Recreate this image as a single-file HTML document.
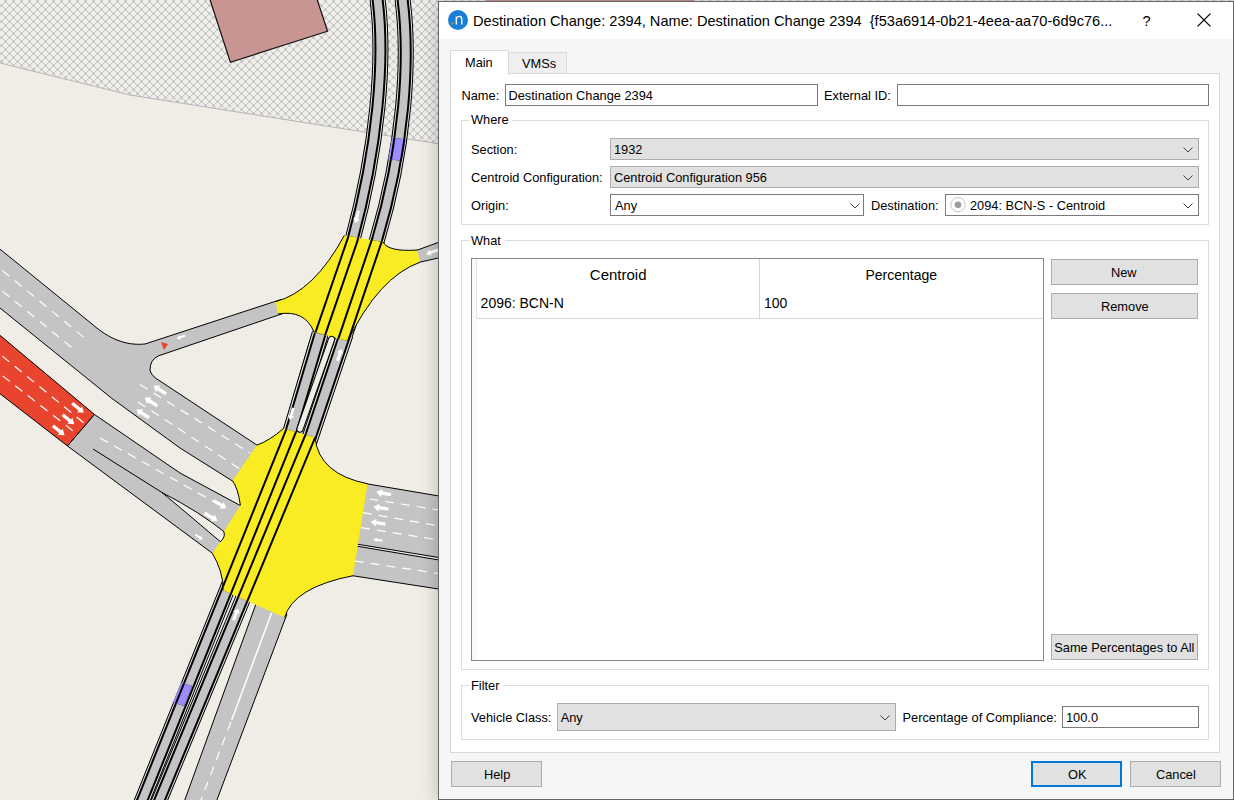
<!DOCTYPE html><html><head><meta charset="utf-8"><style>
html,body{margin:0;padding:0;}
body{width:1234px;height:800px;overflow:hidden;position:relative;background:#f0ede7;font-family:"Liberation Sans",sans-serif;}
.t{position:absolute;line-height:1;white-space:pre;}
.b{position:absolute;}
.s{position:absolute;overflow:visible;}
#map{position:absolute;left:0;top:0;}
</style></head><body>
<svg id="map" width="1234" height="800" viewBox="0 0 1234 800">
<defs>
<pattern id="hatch" width="8" height="8" patternUnits="userSpaceOnUse" shape-rendering="crispEdges"><rect x="0" y="4" width="1" height="1" fill="#c6c7c9"/><rect x="0" y="5" width="1" height="1" fill="#d8d8d8"/><rect x="0" y="6" width="1" height="1" fill="#c6c7c9"/><rect x="1" y="4" width="1" height="1" fill="#d8d8d8"/><rect x="1" y="5" width="1" height="1" fill="#a9abae"/><rect x="1" y="6" width="1" height="1" fill="#d8d8d8"/><rect x="2" y="4" width="1" height="1" fill="#c6c7c9"/><rect x="2" y="5" width="1" height="1" fill="#d8d8d8"/><rect x="2" y="6" width="1" height="1" fill="#c6c7c9"/><rect x="3" y="3" width="1" height="1" fill="#c6c7c9"/><rect x="3" y="7" width="1" height="1" fill="#c6c7c9"/><rect x="4" y="0" width="1" height="1" fill="#c6c7c9"/><rect x="4" y="1" width="1" height="1" fill="#d8d8d8"/><rect x="4" y="2" width="1" height="1" fill="#c6c7c9"/><rect x="5" y="0" width="1" height="1" fill="#d8d8d8"/><rect x="5" y="1" width="1" height="1" fill="#a9abae"/><rect x="5" y="2" width="1" height="1" fill="#d8d8d8"/><rect x="6" y="0" width="1" height="1" fill="#c6c7c9"/><rect x="6" y="1" width="1" height="1" fill="#d8d8d8"/><rect x="6" y="2" width="1" height="1" fill="#c6c7c9"/><rect x="7" y="3" width="1" height="1" fill="#c6c7c9"/><rect x="7" y="7" width="1" height="1" fill="#c6c7c9"/></pattern>
<path id="r1" d="M377,-5 C386,60 377,150 352.5,240 L315.4,348 L291.4,430 L140.4,805"/>
<path id="r2" d="M402,-5 C411,60 404,150 377,240 L340.5,348 L312.8,430 L157.5,805"/>
<path id="nA" d="M344.4,235.3 L383,242 Q388,252 417.5,250 L419.8,262.3 Q379,277 347.8,341 L314,332 Q305,309.5 278,314 L275.8,301.6 Q314,291.5 344.4,235.3 Z"/>
<path id="nB" d="M283.5,428.5 L315,437.5 Q318.8,474 367.6,483.8 L353,575.7 Q293,587.5 284.6,617.6 L223.5,590.5 Q222.75,570.25 212.4,553.5 L220,542 Q226,537 223.8,531.6 L240.4,505.3 Q238,488 232.5,480.8 L257,445 Q269,441 283.5,428.5 Z"/>
<clipPath id="nodes"><use href="#nA"/><use href="#nB"/></clipPath>
<path id="arw" d="M-7.5,-1.7 L2,-1.7 L2,-4 L7.5,0 L2,4 L2,1.7 L-7.5,1.7 Z"/>
</defs>
<rect x="0" y="0" width="1234" height="800" fill="#f0ede7"/>
<!-- hatched area -->
<path d="M-5,-5 L1240,-5 L1240,160 L440,144 L130,95 L0,63 L-5,63 Z" fill="url(#hatch)" stroke="none"/>
<path d="M0,63 L130,95 L440,144" fill="none" stroke="#b5b5b5" stroke-width="1"/>
<!-- building -->
<path d="M200,-31 L307,-31 L327.6,31.2 L230.4,62.2 Z" fill="#c99593" stroke="#111" stroke-width="1.2"/>
<path d="M486,-5 L694,-5 L694,1 L486,1 Z" fill="#c99593"/>

<!-- rails -->
<g fill="none" stroke-linejoin="round">
<use href="#r1" stroke="#000" stroke-width="16"/>
<use href="#r1" stroke="#e4e2de" stroke-width="14"/>
<use href="#r1" stroke="#000" stroke-width="12"/>
<use href="#r1" stroke="#c4c4c4" stroke-width="8"/>
<use href="#r2" stroke="#000" stroke-width="16"/>
<use href="#r2" stroke="#e4e2de" stroke-width="14"/>
<use href="#r2" stroke="#000" stroke-width="12"/>
<use href="#r2" stroke="#c4c4c4" stroke-width="8"/>
</g>
<g fill="none" stroke-linecap="butt">
<path id="m1" d="M320.1,334 L287.9,442"/>
<path id="m2" d="M345.1,334 L308.7,442"/>
<use href="#m1" stroke="#000" stroke-width="17"/>
<use href="#m1" stroke="#e4e2de" stroke-width="15"/>
<use href="#m1" stroke="#000" stroke-width="12.7"/>
<use href="#m1" stroke="#c4c4c4" stroke-width="8.7"/>
<use href="#m2" stroke="#000" stroke-width="17"/>
<use href="#m2" stroke="#e4e2de" stroke-width="15"/>
<use href="#m2" stroke="#000" stroke-width="12.7"/>
<use href="#m2" stroke="#c4c4c4" stroke-width="8.7"/>
</g>

<!-- main road B + branch C -->
<path d="M-10,241 L92,324 C108,338 125,346 145,344 L281,299.5 L283,313.5 L158,356 Q150,360 150,370 Q151,376 160,381 L260.3,447.3 L235.8,483.1 L180,448 L112,398.5 L0,308 L-10,300 Z" fill="#c4c4c4" stroke="#000" stroke-width="1"/>
<!-- red -->
<path d="M-10,327 L94.5,414.5 L67.5,446 L-10,386 Z" fill="#e8442e" stroke="#000" stroke-width="1"/>
<!-- road D -->
<path d="M94.5,414.5 L180,473 L243.8,507.4 L227.2,533.7 L223.3,544.2 L215.7,555.7 L67.5,446 Z" fill="#c4c4c4" stroke="#000" stroke-width="1"/>
<path d="M93,449 L162,492.5 Q200,512 227,534 L223,544 Q195,520 162,492.5" fill="#f0ede7" stroke="#000" stroke-width="1"/>
<!-- road E right -->
<path d="M362,483 L445,497 L445,590 L348,575 Z" fill="#c4c4c4" stroke="#000" stroke-width="1"/>
<path d="M350,543 L445,558.5 L445,561 L350,545 Z" fill="#f0ede7" stroke="#000" stroke-width="1"/>
<!-- road G right of node A -->
<path d="M412,252 L445,240 L445,256.5 L414,263.5 Z" fill="#c4c4c4" stroke="#000" stroke-width="1"/>
<!-- road F bottom -->
<path d="M256.5,602.5 L287,614 L215,805 L183,805 Z" fill="#c4c4c4" stroke="#000" stroke-width="1"/>

<!-- nodes -->
<g fill="#f9ec22" stroke="none">
<use href="#nA"/>
<use href="#nB"/>
</g>
<g fill="none" stroke="#000" stroke-width="1">
<path d="M383,242 Q388,252 417.5,250 M419.8,262.3 Q379,277 347.8,341 M314,332 Q305,309.5 278,314 M275.8,301.6 Q314,291.5 344.4,235.3"/>
<path d="M315,437.5 Q318.8,474 367.6,483.8 M353,575.7 Q293,587.5 284.6,617.6 M223.5,590.5 Q222.75,570.25 212.4,553.5 M220,542 Q226,537 223.8,531.6 M240.4,505.3 Q238,488 232.5,480.8 M257,445 Q269,441 283.5,428.5"/>
</g>
<g fill="none" clip-path="url(#nodes)">
<use href="#r1" stroke="#000" stroke-width="12"/>
<use href="#r1" stroke="#f9ec22" stroke-width="8"/>
<use href="#r2" stroke="#000" stroke-width="12"/>
<use href="#r2" stroke="#f9ec22" stroke-width="8"/>
</g>

<path d="M331.5,339.5 L300,429" fill="none" stroke="#000" stroke-width="7.2" stroke-linecap="round"/>
<path d="M331.5,339.5 L300,429" fill="none" stroke="#f0ede7" stroke-width="5.2" stroke-linecap="round"/>
<!-- lane markings -->
<g fill="none" stroke="#fff" stroke-width="1.2" stroke-dasharray="9 7">
<path d="M-10,260.5 L86,339"/>
<path d="M-10,281 L76,351"/>
<path d="M140,384.5 L250,453"/>
<path d="M138,402 L240,469"/>
<path d="M-10,346 L84,423"/>
<path d="M-10,366 L77,434"/>
<path d="M100,438 L225,508"/>
<path d="M369.3,499 L445,511"/>
<path d="M362.8,512.6 L445,527"/>
<path d="M361,527.7 L445,541"/>
<path d="M354.6,561 L445,574.5"/>
<path d="M199,805 L231.7,720"/>
</g>
<path d="M271.6,612.7 L231.7,720" stroke="#fff" stroke-width="1.5"/>
<!-- arrows -->
<g fill="#fff">
<use href="#arw" transform="translate(159.7,389.8) rotate(213)"/>
<use href="#arw" transform="translate(151,401.8) rotate(213)"/>
<use href="#arw" transform="translate(142.7,413.7) rotate(213)"/>
<use href="#arw" transform="translate(78,408) rotate(39)"/>
<use href="#arw" transform="translate(68.4,419.5) rotate(39)"/>
<use href="#arw" transform="translate(58.7,430.5) rotate(39)"/>
<use href="#arw" transform="translate(220,504.4) rotate(30)"/>
<use href="#arw" transform="translate(211,517) rotate(30)"/>
<use href="#arw" transform="translate(383.6,493.3) rotate(190)"/>
<use href="#arw" transform="translate(381,508) rotate(189)"/>
<use href="#arw" transform="translate(378,522.9) rotate(189)"/>
<use href="#arw" transform="translate(378,540) rotate(189) scale(0.6)"/>
<use href="#arw" transform="translate(199,537) rotate(32) scale(0.6)"/>
<use href="#arw" transform="translate(181,337) rotate(160) scale(0.6)"/>
<use href="#arw" transform="translate(357,217) rotate(104) scale(0.85)"/>
<use href="#arw" transform="translate(432,252) rotate(160) scale(0.85)"/>
<use href="#arw" transform="translate(291.5,414) rotate(107) scale(0.85)"/>
<use href="#arw" transform="translate(339.5,355) rotate(-71) scale(0.85)"/>
<use href="#arw" transform="translate(235.8,614.4) rotate(-68) scale(0.85)"/>
</g>
<path d="M161,342 L168,344 L164,350 Z" fill="#e8442e"/>
<!-- blue markers -->
<clipPath id="bl1"><path d="M392,137.5 L406,139.5 L402,161 L388,159 Z"/></clipPath>
<clipPath id="bl2"><path d="M176,681 L192,686 L184,706 L169,701 Z"/></clipPath>
<g fill="none">
<g clip-path="url(#bl1)"><use href="#r2" stroke="#9c8cff" stroke-width="16"/><use href="#r2" stroke="#000" stroke-width="12"/><use href="#r2" stroke="#9c8cff" stroke-width="8"/></g>
<g clip-path="url(#bl2)"><use href="#r1" stroke="#9c8cff" stroke-width="16"/><use href="#r1" stroke="#000" stroke-width="12"/><use href="#r1" stroke="#9c8cff" stroke-width="8"/></g>
</g>
</svg>
<div class="b" style="left:438px;top:1px;width:794px;height:797px;background:#f6f6f6;border:1px solid #666;box-shadow:-2px 0 16px rgba(0,0,0,0.18);"></div>
<div class="b" style="left:439px;top:2px;width:794px;height:37px;background:#fff;border:0px solid #fff;"></div>
<svg class="s" style="left:447px;top:9px" width="22" height="22" viewBox="0 0 22 22"><circle cx="11" cy="11" r="10" fill="#1b7ed6"/><path d="M9.3 15.5 V7.6 M9.3 9.6 Q10.3 7.3 12.3 7.3 Q14.8 7.3 14.8 10 V15.5" fill="none" stroke="#fff" stroke-width="1.35"/><circle cx="5.6" cy="14.5" r="0.85" fill="#f5b400"/></svg>
<div class="t" style="left:473px;top:14.00px;font-size:14.6px;color:#000;">Destination Change: 2394, Name: Destination Change 2394  {f53a6914-0b21-4eea-aa70-6d9c76...</div>
<div class="t" style="left:1142.5px;top:14.00px;font-size:14.6px;color:#000;">?</div>
<svg class="s" style="left:1197px;top:13px" width="14" height="14" viewBox="0 0 14 14"><path d="M0.5 0.5 L13.5 13.5 M13.5 0.5 L0.5 13.5" stroke="#111" stroke-width="1.1"/></svg>
<div class="b" style="left:450px;top:73px;width:768px;height:678px;background:#fff;border:1px solid #d9d9d9;"></div>
<div class="b" style="left:508px;top:52px;width:57px;height:20px;background:#efefef;border:1px solid #d9d9d9;"></div>
<div class="b" style="left:450px;top:50px;width:57px;height:23px;background:#fff;border:1px solid #d9d9d9;border-bottom:none;height:24px;"></div>
<div class="t" style="left:465px;top:57.00px;font-size:12.8px;color:#000;">Main</div>
<div class="t" style="left:522px;top:58.00px;font-size:12.8px;color:#000;">VMSs</div>
<div class="t" style="left:461.5px;top:90.00px;font-size:12.8px;color:#000;">Name:</div>
<div class="b" style="left:505px;top:84px;width:311px;height:20px;background:#fff;border:1px solid #7a7a7a;"></div>
<div class="t" style="left:508.5px;top:90.00px;font-size:12.8px;color:#000;">Destination Change 2394</div>
<div class="t" style="left:824px;top:90.00px;font-size:12.8px;color:#000;">External ID:</div>
<div class="b" style="left:897px;top:84px;width:310px;height:20px;background:#fff;border:1px solid #7a7a7a;"></div>
<div class="b" style="left:461px;top:120px;width:746px;height:103px;background:none;border:1px solid #dcdcdc;"></div>
<div class="b" style="left:469px;top:112px;width:43px;height:15px;background:#fff;border:0px solid #fff;"></div>
<div class="t" style="left:471px;top:114.00px;font-size:12.8px;color:#000;">Where</div>
<div class="t" style="left:471px;top:144.00px;font-size:12.8px;color:#000;">Section:</div>
<div class="b" style="left:610px;top:138px;width:587px;height:20px;background:#e1e1e1;border:1px solid #adadad;"></div>
<div class="t" style="left:614px;top:144.00px;font-size:12.8px;color:#000;">1932</div>
<svg class="s" style="left:1182.5px;top:146.8px" width="10" height="6" viewBox="0 0 10 6"><path d="M0.5 0.5 L5 5 L9.5 0.5" fill="none" stroke="#444" stroke-width="1"/></svg>
<div class="t" style="left:471px;top:172.00px;font-size:12.8px;color:#000;">Centroid Configuration:</div>
<div class="b" style="left:610px;top:166px;width:587px;height:20px;background:#e1e1e1;border:1px solid #adadad;"></div>
<div class="t" style="left:614px;top:172.00px;font-size:12.8px;color:#000;">Centroid Configuration 956</div>
<svg class="s" style="left:1182.5px;top:174.8px" width="10" height="6" viewBox="0 0 10 6"><path d="M0.5 0.5 L5 5 L9.5 0.5" fill="none" stroke="#444" stroke-width="1"/></svg>
<div class="t" style="left:471px;top:200.00px;font-size:12.8px;color:#000;">Origin:</div>
<div class="b" style="left:610px;top:194px;width:252px;height:20px;background:#fff;border:1px solid #7a7a7a;"></div>
<div class="t" style="left:615px;top:200.00px;font-size:12.8px;color:#000;">Any</div>
<svg class="s" style="left:850.0px;top:202.8px" width="10" height="6" viewBox="0 0 10 6"><path d="M0.5 0.5 L5 5 L9.5 0.5" fill="none" stroke="#444" stroke-width="1"/></svg>
<div class="t" style="left:871px;top:200.00px;font-size:12.8px;color:#000;">Destination:</div>
<div class="b" style="left:945px;top:194px;width:252px;height:20px;background:#fff;border:1px solid #7a7a7a;"></div>
<svg class="s" style="left:948px;top:195px" width="20" height="20" viewBox="0 0 20 20"><circle cx="10" cy="9.7" r="7.2" fill="#fff" stroke="#c4c4c4" stroke-width="1"/><circle cx="10" cy="9.7" r="3.3" fill="#9a9a9a"/></svg>
<div class="t" style="left:970px;top:200.00px;font-size:12.8px;color:#000;">2094: BCN-S - Centroid</div>
<svg class="s" style="left:1182.5px;top:202.8px" width="10" height="6" viewBox="0 0 10 6"><path d="M0.5 0.5 L5 5 L9.5 0.5" fill="none" stroke="#444" stroke-width="1"/></svg>
<div class="b" style="left:461px;top:240px;width:746px;height:428px;background:none;border:1px solid #dcdcdc;"></div>
<div class="b" style="left:469px;top:232px;width:36px;height:15px;background:#fff;border:0px solid #fff;"></div>
<div class="t" style="left:471px;top:235.00px;font-size:12.8px;color:#000;">What</div>
<div class="b" style="left:471px;top:258px;width:571px;height:401px;background:#fff;border:1px solid #828790;"></div>
<div class="b" style="left:472px;top:259px;width:5px;height:401px;background:#fafafa;border:0px solid #fafafa;"></div>
<div class="b" style="left:476px;top:259px;width:1px;height:60px;background:#e5e5e5;border:0px solid #e5e5e5;"></div>
<div class="b" style="left:477px;top:318px;width:566px;height:1px;background:#d8d8d8;border:0px solid #d8d8d8;"></div>
<div class="b" style="left:759px;top:259px;width:1px;height:60px;background:#d8d8d8;border:0px solid #d8d8d8;"></div>
<div class="t" style="left:589.8px;top:267.00px;font-size:15px;color:#000;">Centroid</div>
<div class="t" style="left:865.4px;top:268.00px;font-size:14px;color:#000;">Percentage</div>
<div class="t" style="left:480.6px;top:296.00px;font-size:14px;color:#000;">2096: BCN-N</div>
<div class="t" style="left:764px;top:296.00px;font-size:14px;color:#000;">100</div>
<div class="b" style="left:1051px;top:259px;width:145px;height:24px;background:#e1e1e1;border:1px solid #adadad;"></div>
<div class="t" style="left:1111px;top:267.00px;font-size:12.8px;color:#000;">New</div>
<div class="b" style="left:1051px;top:293px;width:145px;height:24px;background:#e1e1e1;border:1px solid #adadad;"></div>
<div class="t" style="left:1101px;top:301.00px;font-size:12.8px;color:#000;">Remove</div>
<div class="b" style="left:1051px;top:634px;width:145px;height:24px;background:#e1e1e1;border:1px solid #adadad;"></div>
<div class="t" style="left:1054.3px;top:642.00px;font-size:12.8px;color:#000;">Same Percentages to All</div>
<div class="b" style="left:461px;top:685px;width:746px;height:53px;background:none;border:1px solid #dcdcdc;"></div>
<div class="b" style="left:469px;top:677px;width:34px;height:15px;background:#fff;border:0px solid #fff;"></div>
<div class="t" style="left:471px;top:680.00px;font-size:12.8px;color:#000;">Filter</div>
<div class="t" style="left:471px;top:712.00px;font-size:12.8px;color:#000;">Vehicle Class:</div>
<div class="b" style="left:557px;top:703px;width:337px;height:26px;background:#e1e1e1;border:1px solid #adadad;"></div>
<div class="t" style="left:560.7px;top:712.00px;font-size:12.8px;color:#000;">Any</div>
<svg class="s" style="left:879.5px;top:714.8px" width="10" height="6" viewBox="0 0 10 6"><path d="M0.5 0.5 L5 5 L9.5 0.5" fill="none" stroke="#444" stroke-width="1"/></svg>
<div class="t" style="left:902.5px;top:712.00px;font-size:12.8px;color:#000;">Percentage of Compliance:</div>
<div class="b" style="left:1062px;top:706px;width:135px;height:20px;background:#fff;border:1px solid #7a7a7a;"></div>
<div class="t" style="left:1066px;top:712.00px;font-size:12.8px;color:#000;">100.0</div>
<div class="b" style="left:451px;top:761px;width:89px;height:24px;background:#e1e1e1;border:1px solid #adadad;"></div>
<div class="t" style="left:484px;top:769.00px;font-size:12.8px;color:#000;">Help</div>
<div class="b" style="left:1031px;top:761px;width:87px;height:22px;background:#e1e1e1;border:2px solid #0078d7;"></div>
<div class="t" style="left:1068px;top:769.00px;font-size:12.8px;color:#000;">OK</div>
<div class="b" style="left:1130px;top:761px;width:89px;height:24px;background:#e1e1e1;border:1px solid #adadad;"></div>
<div class="t" style="left:1156px;top:769.00px;font-size:12.8px;color:#000;">Cancel</div>
</body></html>
